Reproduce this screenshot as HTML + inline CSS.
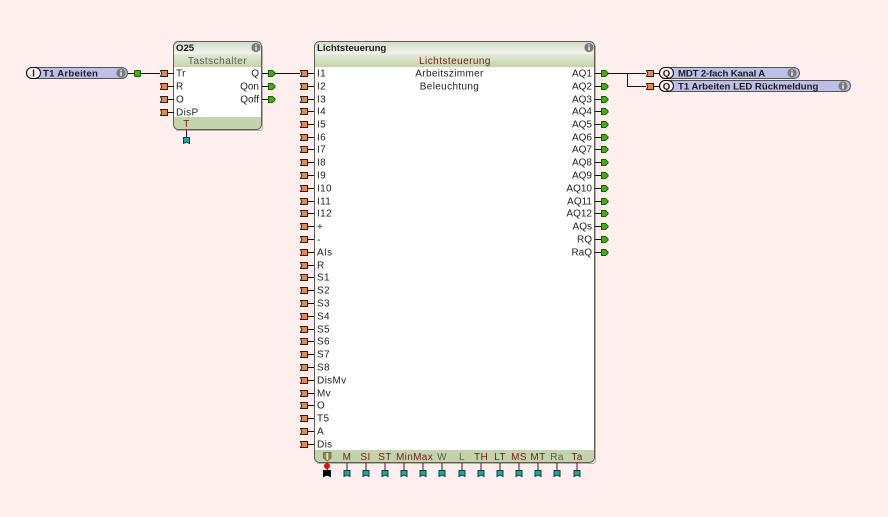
<!DOCTYPE html>
<html><head><meta charset="utf-8"><style>
html,body{margin:0;padding:0;background:#ffefef;width:888px;height:517px;overflow:hidden}
svg{display:block}
text{font-family:"Liberation Sans",sans-serif;font-size:10px;letter-spacing:.35px;fill:#222}
.b{font-weight:bold;font-size:9.6px;letter-spacing:0;fill:#1c1c1c}
.e{text-anchor:end;letter-spacing:0}
.m{text-anchor:middle}
.r{fill:#7a1c10;text-anchor:middle}
.g{fill:#5c5c50;text-anchor:middle}
</style></head><body>
<svg width="888" height="517" viewBox="0 0 888 517" xmlns="http://www.w3.org/2000/svg">
<defs>
<linearGradient id="h" x1="0" y1="0" x2="0" y2="1"><stop offset="0" stop-color="#d5dccb"/><stop offset="1" stop-color="#f2f5ec"/></linearGradient>
<linearGradient id="s" x1="0" y1="0" x2="0" y2="1"><stop offset="0" stop-color="#e4ebda"/><stop offset="1" stop-color="#c3d3ad"/></linearGradient>
<g id="o"><path d="M0 .5H7" stroke="#111" stroke-width="1"/><path d="M-6.500 -2.500H0.500V3.500H-6.500L-5.300 .5Z" fill="#f0883f" stroke="#222" stroke-width="1"/></g>
<g id="gr"><path d="M0 .5H-6" stroke="#111" stroke-width="1"/><path d="M.5 -2.500H4.500L7 -.2V1.200L4.500 3.500H.5Z" fill="#45ad14" stroke="#1d5a08" stroke-width="1"/></g>
<g id="t"><path d="M1 -7V0" stroke="#5a1010" stroke-width="1"/><path d="M-2 .5H4V6.500L1 5L-2 6.500Z" fill="#1ba9a0" stroke="#143c3c" stroke-width="1"/></g>
<g id="i"><circle cx=".5" cy=".5" r="4.600" fill="#7b7b7b"/><path d="M.5 -2.500V-1.300M.5 -.3V3.300" stroke="#ececec" stroke-width="1.600"/></g>
</defs>
<rect width="888" height="517" fill="#ffefef"/>

<!-- wires -->
<g stroke="#111" stroke-width="1" fill="none">
<path d="M128 73.500H134"/><path d="M141 73.500H160"/>
<path d="M275 73.500H300"/>
<path d="M608 73.500H646M627.500 73.500V86.500H646"/>
<path d="M653 73.500H659M653 86.500H659"/>
</g>

<!-- input block -->
<rect x="26.500" y="67.500" width="101" height="11" rx="5.500" fill="#bcbfe8" stroke="#555" stroke-width="1"/>
<rect x="26.500" y="67.500" width="14" height="11" rx="5.500" fill="#ffefef" stroke="#111" stroke-width="1.100"/>
<text class="m" x="33.500" y="76.500" style="font-weight:bold;letter-spacing:0">I</text>
<text class="b" x="43" y="76.500" style="letter-spacing:.25px">T1 Arbeiten</text>
<use href="#i" x="120.500" y="72.500"/>
<rect x="134.500" y="70.500" width="6" height="6" rx="1" fill="#45ad14" stroke="#1d5a08"/>

<!-- O25 -->
<rect x="173.500" y="41.500" width="88" height="88" rx="5" fill="#fff"/>
<path d="M174 54V47a5 5 0 0 1 5-5H256a5 5 0 0 1 5 5V54Z" fill="url(#h)"/>
<rect x="174" y="54" width="87" height="13" fill="url(#s)"/>
<path d="M174 117H261V124a5 5 0 0 1-5 5H179a5 5 0 0 1-5-5Z" fill="#c3d3ad"/>
<path d="M262.500 46V128a2.500 2.500 0 0 1-2.500 2.500H176" fill="none" stroke="#b5b0ac" stroke-width="1"/>
<rect x="173.500" y="41.500" width="88" height="88" rx="5" fill="none" stroke="#5d5d52" stroke-width="1"/>
<text class="b" x="176" y="51">O25</text>
<use href="#i" x="255.500" y="47"/>
<text class="g" x="217.500" y="64" style="letter-spacing:.5px">Tastschalter</text>
<text x="176" y="76.500">Tr</text><text x="176" y="89.500">R</text><text x="176" y="102.500">O</text><text x="176" y="115.500">DisP</text>
<text class="e" x="259" y="76.500">Q</text><text class="e" x="259" y="89.500">Qon</text><text class="e" x="259" y="102.500">Qoff</text>
<text class="r" x="186.500" y="127">T</text>
<use href="#o" x="167" y="73"/><use href="#o" x="167" y="86"/><use href="#o" x="167" y="99"/><use href="#o" x="167" y="112"/>
<use href="#gr" x="268" y="73"/><use href="#gr" x="268" y="86"/><use href="#gr" x="268" y="99"/>
<use href="#t" x="185.500" y="137"/>

<!-- Lichtsteuerung -->
<rect x="314.500" y="41.500" width="280" height="421" rx="5" fill="#fff"/>
<path d="M315 54V47a5 5 0 0 1 5-5H589a5 5 0 0 1 5 5V54Z" fill="url(#h)"/>
<rect x="315" y="54" width="279" height="13" fill="url(#s)"/>
<path d="M315 450H594V457a5 5 0 0 1-5 5H320a5 5 0 0 1-5-5Z" fill="#c3d3ad"/>
<path d="M595.500 46V461a2.500 2.500 0 0 1-2.500 2.500H317" fill="none" stroke="#b5b0ac" stroke-width="1"/>
<rect x="314.500" y="41.500" width="280" height="421" rx="5" fill="none" stroke="#5d5d52" stroke-width="1"/>
<text class="b" x="317" y="51">Lichtsteuerung</text>
<use href="#i" x="588.500" y="47"/>
<text class="r" x="455" y="64" style="letter-spacing:.45px">Lichtsteuerung</text>
<text class="m" x="449.500" y="76.500">Arbeitszimmer</text>
<text class="m" x="449.500" y="89.500">Beleuchtung</text>

<g>
<text x="317" y="76.500">I1</text><text x="317" y="89.500">I2</text><text x="317" y="102.500">I3</text><text x="317" y="114.500">I4</text><text x="317" y="127.500">I5</text><text x="317" y="140.500">I6</text><text x="317" y="152.500">I7</text><text x="317" y="165.500">I8</text><text x="317" y="178.500">I9</text><text x="317" y="191.500">I10</text><text x="317" y="204.500">I11</text><text x="317" y="216.500">I12</text><text x="317" y="230">+</text><text x="317" y="243">-</text><text x="317" y="255.500">AIs</text><text x="317" y="268.500">R</text><text x="317" y="280.500">S1</text><text x="317" y="293.500">S2</text><text x="317" y="306.500">S3</text><text x="317" y="319.500">S4</text><text x="317" y="332.500">S5</text><text x="317" y="344.500">S6</text><text x="317" y="357.500">S7</text><text x="317" y="370.500">S8</text><text x="317" y="383.500">DisMv</text><text x="317" y="396.500">Mv</text><text x="317" y="408.500">O</text><text x="317" y="421.500">T5</text><text x="317" y="434.500">A</text><text x="317" y="447.500">Dis</text>
</g>
<g>
<use href="#o" x="307" y="73"/><use href="#o" x="307" y="86"/><use href="#o" x="307" y="99"/><use href="#o" x="307" y="111"/><use href="#o" x="307" y="124"/><use href="#o" x="307" y="137"/><use href="#o" x="307" y="149"/><use href="#o" x="307" y="162"/><use href="#o" x="307" y="175"/><use href="#o" x="307" y="188"/><use href="#o" x="307" y="201"/><use href="#o" x="307" y="213"/><use href="#o" x="307" y="226"/><use href="#o" x="307" y="239"/><use href="#o" x="307" y="252"/><use href="#o" x="307" y="265"/><use href="#o" x="307" y="277"/><use href="#o" x="307" y="290"/><use href="#o" x="307" y="303"/><use href="#o" x="307" y="316"/><use href="#o" x="307" y="329"/><use href="#o" x="307" y="341"/><use href="#o" x="307" y="354"/><use href="#o" x="307" y="367"/><use href="#o" x="307" y="380"/><use href="#o" x="307" y="393"/><use href="#o" x="307" y="405"/><use href="#o" x="307" y="418"/><use href="#o" x="307" y="431"/><use href="#o" x="307" y="444"/>
</g>
<g>
<text class="e" x="592" y="76.500">AQ1</text><text class="e" x="592" y="89.500">AQ2</text><text class="e" x="592" y="102.500">AQ3</text><text class="e" x="592" y="114.500">AQ4</text><text class="e" x="592" y="127.500">AQ5</text><text class="e" x="592" y="140.500">AQ6</text><text class="e" x="592" y="152.500">AQ7</text><text class="e" x="592" y="165.500">AQ8</text><text class="e" x="592" y="178.500">AQ9</text><text class="e" x="592" y="191.500">AQ10</text><text class="e" x="592" y="204.500">AQ11</text><text class="e" x="592" y="216.500">AQ12</text><text class="e" x="592" y="229.500">AQs</text><text class="e" x="592" y="242.500">RQ</text><text class="e" x="592" y="255.500">RaQ</text>
</g>
<g>
<use href="#gr" x="601" y="73"/><use href="#gr" x="601" y="86"/><use href="#gr" x="601" y="99"/><use href="#gr" x="601" y="111"/><use href="#gr" x="601" y="124"/><use href="#gr" x="601" y="137"/><use href="#gr" x="601" y="149"/><use href="#gr" x="601" y="162"/><use href="#gr" x="601" y="175"/><use href="#gr" x="601" y="188"/><use href="#gr" x="601" y="201"/><use href="#gr" x="601" y="213"/><use href="#gr" x="601" y="226"/><use href="#gr" x="601" y="239"/><use href="#gr" x="601" y="252"/>
</g>

<!-- bottom labels -->
<path d="M323.500 452.500H331V458L327.300 461L323.500 458Z" fill="#8d8a4a" stroke="#555" stroke-width=".7"/><path d="M327.300 453V460" stroke="#eee6a0" stroke-width="1.800"/>
<text class="r" x="347" y="460">M</text><text class="r" x="365.500" y="460">SI</text><text class="r" x="385" y="460">ST</text><text class="r" x="414.500" y="460">MinMax</text><text class="g" x="442" y="460">W</text><text class="g" x="462" y="460">L</text><text class="r" x="481" y="460">TH</text><text class="r" x="500" y="460">LT</text><text class="r" x="519" y="460">MS</text><text class="r" x="538" y="460">MT</text><text class="g" x="557" y="460">Ra</text><text class="r" x="577" y="460">Ta</text>
<use href="#t" x="346" y="470"/><use href="#t" x="365" y="470"/><use href="#t" x="384" y="470"/><use href="#t" x="403" y="470"/><use href="#t" x="422" y="470"/><use href="#t" x="441" y="470"/><use href="#t" x="461" y="470"/><use href="#t" x="480" y="470"/><use href="#t" x="499" y="470"/><use href="#t" x="518" y="470"/><use href="#t" x="537" y="470"/><use href="#t" x="556" y="470"/><use href="#t" x="576" y="470"/>
<path d="M327.500 463V470" stroke="#222"/><circle cx="327" cy="466" r="3" fill="#e01010"/><path d="M323.500 470.500H330.500V476.500L327 475L323.500 476.500Z" fill="#000" stroke="#000"/>

<!-- output blocks -->
<use href="#o" x="653" y="73"/><use href="#o" x="653" y="86"/>
<rect x="659.500" y="67.500" width="140" height="11" rx="5.500" fill="#bcbfe8" stroke="#555"/>
<rect x="659.500" y="67.500" width="14" height="11" rx="5.500" fill="#ffefef" stroke="#111" stroke-width="1.100"/>
<text class="b" x="666.500" y="76.500" style="text-anchor:middle">Q</text>
<text class="b" x="678" y="76.500" style="letter-spacing:-.15px">MDT 2-fach Kanal A</text>
<use href="#i" x="791.500" y="72.500"/>
<rect x="659.500" y="80.500" width="191" height="11" rx="5.500" fill="#bcbfe8" stroke="#555"/>
<rect x="659.500" y="80.500" width="14" height="11" rx="5.500" fill="#ffefef" stroke="#111" stroke-width="1.100"/>
<text class="b" x="666.500" y="89.500" style="text-anchor:middle">Q</text>
<text class="b" x="678" y="89.500">T1 Arbeiten LED Rückmeldung</text>
<use href="#i" x="842.500" y="85.500"/>
</svg>
</body></html>
